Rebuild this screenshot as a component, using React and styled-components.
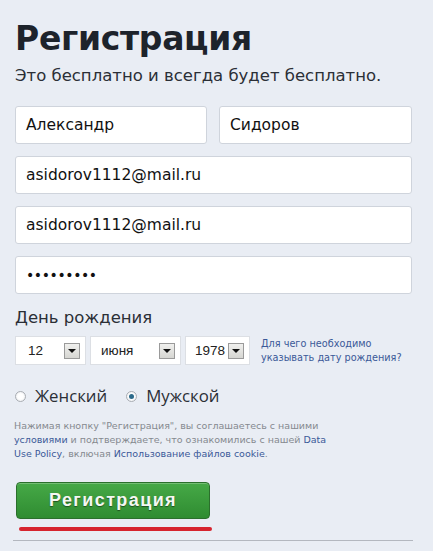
import React from 'react';
import styled, { createGlobalStyle } from 'styled-components';

const Global = createGlobalStyle`
  html, body { margin: 0; padding: 0; background: #e9edf4; }
  body { font-family: "DejaVu Sans", Tahoma, Verdana, sans-serif; }
`;

const Page = styled.div`
  width: 433px;
  height: 551px;
  box-sizing: border-box;
  padding: 18px 21px 0 15px;
  background: #e9edf4;
  overflow: hidden;
  display: flex;
  flex-direction: column;
`;

const Title = styled.h1`
  margin: 0;
  font-size: 33px;
  line-height: 42px;
  font-weight: bold;
  color: #1d232b;
  letter-spacing: -0.3px;
`;

const Subtitle = styled.p`
  margin: 5px 0 0;
  font-size: 16.5px;
  line-height: 22px;
  color: #2b2f36;
`;

const Fields = styled.div`
  margin-top: 19px;
  display: flex;
  flex-direction: column;
  gap: 12px;
`;

const NameRow = styled.div`
  display: grid;
  grid-template-columns: 192px 193px;
  gap: 12px;
`;

const Field = styled.div`
  box-sizing: border-box;
  height: 38px;
  padding: 0 10px;
  display: flex;
  align-items: center;
  background: #fff;
  border: 1px solid #cfd4dc;
  border-radius: 3px;
  font-size: ${p => (p.$dots ? '14px' : '15.5px')};
  color: #111;
  letter-spacing: ${p => (p.$dots ? '-0.4px' : '0')};
`;

const Label = styled.div`
  margin-top: 13px;
  font-size: 16.5px;
  line-height: 22px;
  color: #2b2f36;
`;

const BirthRow = styled.div`
  margin-top: 7px;
  display: flex;
  align-items: center;
  gap: 4px;
`;

const Select = styled.div`
  box-sizing: border-box;
  width: ${p => p.$w}px;
  height: 29px;
  background: #fff;
  border: 1px solid #dcdfe4;
  display: flex;
  align-items: center;
  justify-content: space-between;
  padding: 0 5px 0 ${p => p.$pl}px;
  font-family: "Liberation Sans", Arial, sans-serif;
  font-size: 13.5px;
  color: #222;
`;

const Arrow = styled.span`
  box-sizing: border-box;
  width: 16px;
  height: 16px;
  border: 1px solid #9a9a9a;
  background: linear-gradient(#f0f0ee, #d6d6d2);
  display: flex;
  align-items: center;
  justify-content: center;
  &::after {
    content: '';
    border-left: 4px solid transparent;
    border-right: 4px solid transparent;
    border-top: 4px solid #111;
  }
`;

const Why = styled.a`
  margin-left: 7px;
  font-size: 9.7px;
  line-height: 14px;
  white-space: nowrap;
  color: #3b5998;
  text-decoration: none;
`;

const GenderRow = styled.div`
  margin-top: 19px;
  display: flex;
  align-items: center;
  font-family: "Open Sans", "DejaVu Sans", sans-serif;
  font-size: 16.8px;
  line-height: 24px;
  color: #2b2f36;
`;

const Option = styled.label`
  display: flex;
  align-items: center;
  gap: 9px;
  margin-right: 19px;
`;

const Radio = styled.span`
  box-sizing: border-box;
  width: 11px;
  height: 11px;
  border-radius: 50%;
  border: 1px solid #a9adb3;
  background: radial-gradient(circle, #fff 40%, #e4e6ea 100%);
  display: flex;
  align-items: center;
  justify-content: center;
  &::after {
    content: '';
    width: 5px;
    height: 5px;
    border-radius: 50%;
    background: ${p => (p.$checked ? '#2c6a8a' : 'transparent')};
  }
`;

const Terms = styled.p`
  margin: 11px 0 0 -1px;
  font-size: 9.5px;
  line-height: 14px;
  color: #85898f;
  a { color: #3b5998; text-decoration: none; font-weight: normal; }
`;

const Button = styled.button`
  margin: 21px 0 0 1px;
  box-sizing: border-box;
  width: 194px;
  height: 37px;
  border: 1px solid #2b6f2c;
  border-radius: 4px;
  background: linear-gradient(#46a947, #2f8c31);
  color: #f4f7f2;
  font-family: "Liberation Sans", Arial, sans-serif;
  font-weight: bold;
  font-size: 18px;
  letter-spacing: 1.4px;
  text-shadow: 0 1px 1px rgba(0, 0, 0, 0.45);
  box-shadow: inset 0 1px 0 rgba(255, 255, 255, 0.25);
  cursor: pointer;
`;

const Underline = styled.div`
  margin: 8px 0 0 4px;
  width: 193px;
  height: 4px;
  border-radius: 2px;
  background: #d6242e;
`;

const Divider = styled.div`
  margin: 9px 0 0 -2px;
  width: 400px;
  height: 1px;
  background: #b3b7bf;
`;

export default function App() {
  return (
    <>
      <Global />
      <Page>
        <Title>Регистрация</Title>
        <Subtitle>Это бесплатно и всегда будет бесплатно.</Subtitle>
        <Fields>
          <NameRow>
            <Field>Александр</Field>
            <Field>Сидоров</Field>
          </NameRow>
          <Field>asidorov1112@mail.ru</Field>
          <Field>asidorov1112@mail.ru</Field>
          <Field $dots>•••••••••</Field>
        </Fields>
        <Label>День рождения</Label>
        <BirthRow>
          <Select $w={71} $pl={12}>12<Arrow /></Select>
          <Select $w={91} $pl={10}>июня<Arrow /></Select>
          <Select $w={65} $pl={9}>1978<Arrow /></Select>
          <Why href="#">Для чего необходимо<br />указывать дату рождения?</Why>
        </BirthRow>
        <GenderRow>
          <Option><Radio />Женский</Option>
          <Option><Radio $checked />Мужской</Option>
        </GenderRow>
        <Terms>
          Нажимая кнопку "Регистрация", вы соглашаетесь с нашими<br />
          <a href="#">условиями</a> и подтверждаете, что ознакомились с нашей <a href="#">Data</a><br />
          <a href="#">Use Policy</a>, включая <a href="#">Использование файлов cookie</a>.
        </Terms>
        <Button>Регистрация</Button>
        <Underline />
        <Divider />
      </Page>
    </>
  );
}
